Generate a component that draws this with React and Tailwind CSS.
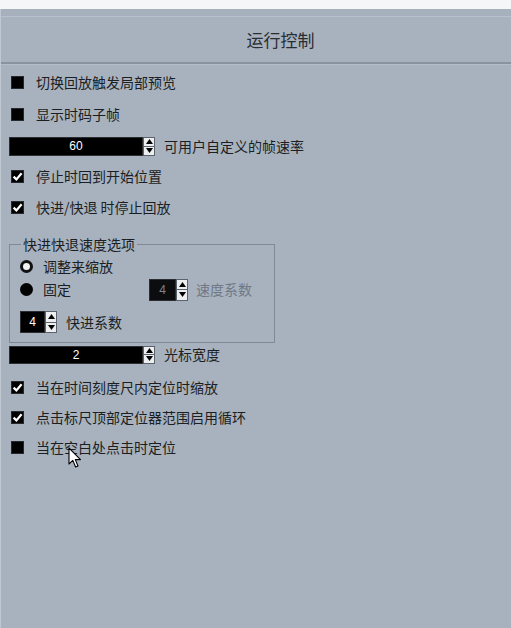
import React from 'react';

const FONT = { fontFamily: '"Noto Sans CJK SC", "Noto Sans", sans-serif' };

function Arrow({ up }) {
  return (
    <svg width="7" height="5" viewBox="0 0 7 5">
      {up ? <path d="M0 5 L3.5 0 L7 5 Z" fill="#000" /> : <path d="M0 0 L3.5 5 L7 0 Z" fill="#000" />}
    </svg>
  );
}

function Spin({ value, fieldW, h, dim }) {
  return (
    <div className="flex" style={{ height: h }}>
      <div
        className={`flex items-center justify-center border border-[#2b2d30] ${dim ? 'bg-[#0c0d0f] text-[#7c838c]' : 'bg-black text-white'} text-[12px]`}
        style={{ width: fieldW, fontFamily: '"Liberation Sans", sans-serif' }}
      >
        {value}
      </div>
      <div className="flex w-[12px] flex-col gap-[1px] border border-[#5b636d] bg-[#5b636d]">
        <div className="flex flex-1 items-center justify-center bg-[#eceef0]">
          <Arrow up />
        </div>
        <div className="flex flex-1 items-center justify-center bg-[#eceef0]">
          <Arrow />
        </div>
      </div>
    </div>
  );
}

function Check({ checked }) {
  return (
    <div className="flex h-[13px] w-[13px] items-center justify-center border border-[#26282c] bg-black">
      {checked && (
        <svg width="11" height="11" viewBox="0 0 11 11">
          <path d="M1.6 5.6 L4.4 8.4 L9.6 2.2" fill="none" stroke="#fff" strokeWidth="2.2" />
        </svg>
      )}
    </div>
  );
}

function CheckRow({ label, checked, h }) {
  return (
    <div className="flex items-center gap-[12px] px-[10px]" style={{ height: h }}>
      <Check checked={checked} />
      <span className="text-[14px] text-[#1b1e22]">{label}</span>
    </div>
  );
}

function Radio({ checked }) {
  return checked ? (
    <div className="h-[13px] w-[13px] rounded-full bg-black" />
  ) : (
    <div className="h-[13px] w-[13px] rounded-full border-[3px] border-[#111] bg-[#f1f3f5]" />
  );
}

export default function App() {
  return (
    <div className="h-[628px] w-[511px] overflow-hidden bg-[#f5f6f8]" style={FONT}>
      <div className="mt-[9px] flex h-[619px] flex-col border-l border-[#bfc7d1] bg-[#a8b2bf]">
        {/* header */}
        <div className="h-[7px] bg-[#a7b1bd]" />
        <div className="flex h-[46px] items-center justify-center border-t border-[#b7c0cb] pl-[49px] text-[17px] text-[#2a2d31]">
          运行控制
        </div>
        <div className="h-[2px] bg-[#89939e]" />
        <div className="h-[1px] bg-[#b3bcc7]" />

        {/* options */}
        <div className="pt-[2px]">
          <CheckRow label="切换回放触发局部预览" h={31} />
          <CheckRow label="显示时码子帧" h={33} />
          <div className="flex h-[30px] items-center gap-[9px] px-[8px]">
            <Spin value="60" fieldW={134} h={19} />
            <span className="text-[14px] text-[#1b1e22]">可用户自定义的帧速率</span>
          </div>
          <CheckRow label="停止时回到开始位置" checked h={30} />
          <CheckRow label="快进/快退 时停止回放" checked h={32} />

          <fieldset className="mx-[8px] mt-[13px] w-[266px] border border-[#7f8893] px-[10px] pb-[9px]">
            <legend className="ml-[1px] px-[2px] text-[14px] leading-[16px] text-[#1b1e22]">快进快退速度选项</legend>
            <div className="flex h-[25px] items-center gap-[10px] pt-[4px]">
              <Radio />
              <span className="text-[14px] text-[#1b1e22]">调整来缩放</span>
            </div>
            <div className="flex h-[25px] items-center">
              <div className="flex w-[129px] items-center gap-[10px]">
                <Radio checked />
                <span className="text-[14px] text-[#1b1e22]">固定</span>
              </div>
              <Spin value="4" fieldW={27} h={22} dim />
              <span className="ml-[8px] text-[14px] text-[#6f7883]">速度系数</span>
            </div>
            <div className="mt-[9px] flex h-[22px] items-center gap-[9px]">
              <Spin value="4" fieldW={25} h={22} />
              <span className="text-[14px] text-[#1b1e22]">快进系数</span>
            </div>
          </fieldset>

          <div className="mt-[2px] flex h-[19px] items-center gap-[9px] px-[8px]">
            <Spin value="2" fieldW={134} h={18} />
            <span className="text-[14px] text-[#1b1e22]">光标宽度</span>
          </div>
          <div className="h-[8px]" />
          <CheckRow label="当在时间刻度尺内定位时缩放" checked h={30} />
          <CheckRow label="点击标尺顶部定位器范围启用循环" checked h={30} />
          <div className="relative">
            <CheckRow label="当在空白处点击时定位" h={31} />
            <svg className="absolute left-[67px] top-[15px]" width="14" height="22" viewBox="0 0 14 22">
              <path d="M1 1 L1 17 L4.8 13.4 L7.6 20 L10 19 L7.3 12.6 L12.5 12.6 Z" fill="#fff" stroke="#000" strokeWidth="1.1" strokeLinejoin="round" />
            </svg>
          </div>
        </div>
      </div>
    </div>
  );
}
